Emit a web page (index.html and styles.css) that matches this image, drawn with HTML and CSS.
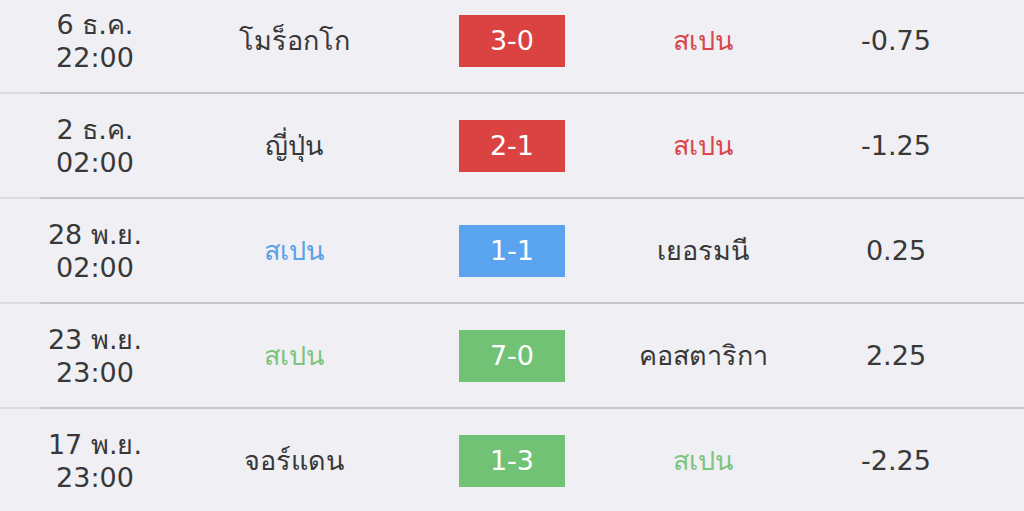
FILE: index.html
```html
<!DOCTYPE html>
<html lang="th">
<head>
<meta charset="utf-8">
<link rel="stylesheet" href="styles.css">
</head>
<body>
<div class="table">
  <div class="row">
    <div class="date">6 ธ.ค.<br>22:00</div>
    <div class="team">โมร็อกโก</div>
    <div class="score"><span class="badge red">3-0</span></div>
    <div class="team t-red">สเปน</div>
    <div class="hcp">-0.75</div>
  </div>
  <div class="row">
    <div class="date">2 ธ.ค.<br>02:00</div>
    <div class="team">ญี่ปุ่น</div>
    <div class="score"><span class="badge red">2-1</span></div>
    <div class="team t-red">สเปน</div>
    <div class="hcp">-1.25</div>
  </div>
  <div class="row">
    <div class="date">28 พ.ย.<br>02:00</div>
    <div class="team t-blue">สเปน</div>
    <div class="score"><span class="badge blue">1-1</span></div>
    <div class="team">เยอรมนี</div>
    <div class="hcp">0.25</div>
  </div>
  <div class="row">
    <div class="date">23 พ.ย.<br>23:00</div>
    <div class="team t-green">สเปน</div>
    <div class="score"><span class="badge green">7-0</span></div>
    <div class="team">คอสตาริกา</div>
    <div class="hcp">2.25</div>
  </div>
  <div class="row">
    <div class="date">17 พ.ย.<br>23:00</div>
    <div class="team">จอร์แดน</div>
    <div class="score"><span class="badge green">1-3</span></div>
    <div class="team t-green">สเปน</div>
    <div class="hcp">-2.25</div>
  </div>
</div>
</body>
</html>
```

FILE: styles.css
```css
html, body {
  margin: 0;
  padding: 0;
  background: #efeff4;
  overflow: hidden;
}
body {
  font-family: "DejaVu Sans", Roboto, "Liberation Sans", sans-serif;
  color: #383838;
}
.table {
  margin-top: -11px;
}
.row {
  position: relative;
  display: grid;
  grid-template-columns: 190px 208px 228px 154px 232px;
  align-items: center;
  height: 103px;
  border-bottom: 2px solid #dcdce0;
}
.row::after {
  content: "";
  position: absolute;
  left: 40px;
  right: 0;
  bottom: -2px;
  height: 2px;
  background: #c8c8cc;
}
.date {
  text-align: center;
  font-size: 27px;
  line-height: 33px;
  padding-top: 1px;
}
.team {
  text-align: center;
  font-size: 27px;
}
.score {
  display: flex;
  justify-content: center;
}
.badge {
  display: flex;
  align-items: center;
  justify-content: center;
  width: 106px;
  height: 52px;
  color: #ffffff;
  font-size: 27px;
}
.red { background: #db4343; }
.blue { background: #59a3ef; }
.green { background: #72c275; }
.t-red { color: #d9474c; }
.t-blue { color: #5aa1e8; }
.t-green { color: #7cc47f; }
.hcp {
  text-align: center;
  font-size: 27px;
}
```
